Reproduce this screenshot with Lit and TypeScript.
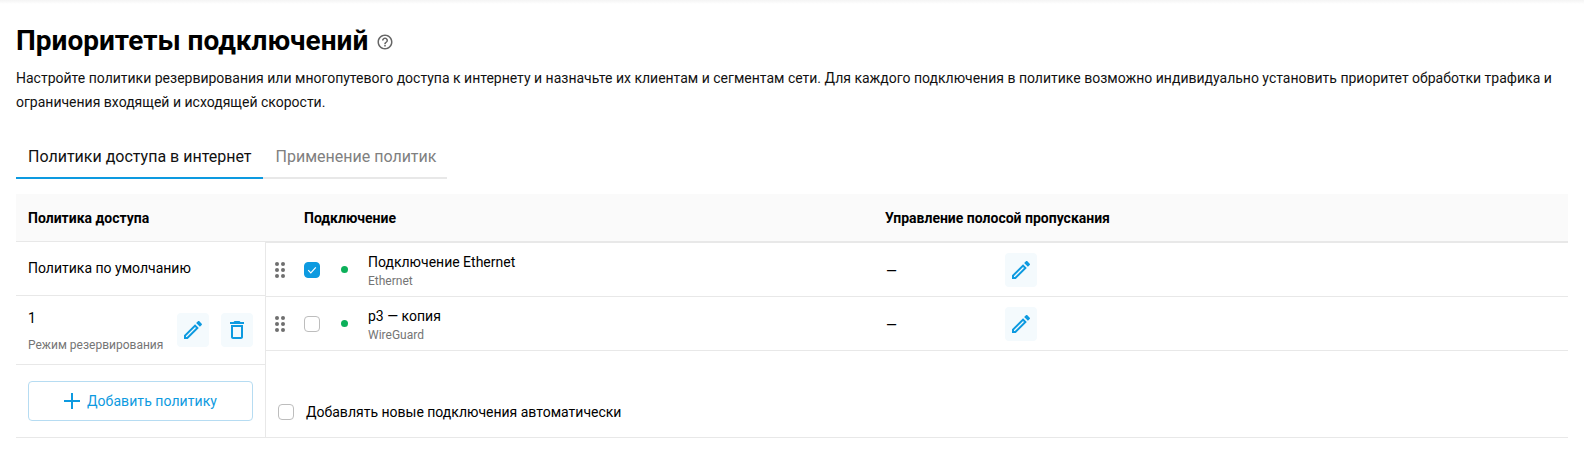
import { LitElement, css, html, svg } from 'lit';
import { customElement } from 'lit/decorators.js';

const editIcon = svg`<path d="M14.06 9.02l.92.92L5.92 19H5v-.92l9.06-9.06M17.66 3c-.25 0-.51.1-.7.29l-1.83 1.83 3.75 3.75 1.83-1.83c.39-.39.39-1.02 0-1.41l-2.34-2.34c-.2-.2-.45-.29-.71-.29zm-3.6 3.19L3 17.25V21h3.75L17.81 9.94l-3.75-3.75z"/>`;
const deleteIcon = svg`<path d="M16 9v10H8V9h8m-1.5-6h-5l-1 1H5v2h14V4h-3.5l-1-1zM18 7H6v12c0 1.1.9 2 2 2h8c1.1 0 2-.9 2-2V7z"/>`;
const helpIcon = svg`<path d="M11 18h2v-2h-2v2zm1-16C6.48 2 2 6.48 2 12s4.48 10 10 10 10-4.48 10-10S17.52 2 12 2zm0 18c-4.41 0-8-3.59-8-8s3.59-8 8-8 8 3.59 8 8-3.59 8-8 8zm0-14c-2.21 0-4 1.79-4 4h2c0-1.1.9-2 2-2s2 .9 2 2c0 2-3 1.75-3 5h2c0-2.25 3-2.5 3-5 0-2.21-1.79-4-4-4z"/>`;

const connections = [
  { name: 'Подключение Ethernet', type: 'Ethernet', checked: true },
  { name: 'p3 — копия', type: 'WireGuard', checked: false },
];

@customElement('app-root')
export class AppRoot extends LitElement {
  static styles = css`
    :host {
      display: block;
      font-family: Roboto, sans-serif;
      font-size: 14px;
      color: #000;
      background: #fff;
      height: 473px;
      overflow: hidden;
    }

    .top-shade {
      height: 4px;
      background: linear-gradient(#f4f4f4, #fff);
    }

    .page {
      padding: 0 16px;
    }

    .title-row {
      display: flex;
      align-items: center;
      gap: 8px;
      height: 44px;
      margin-top: 15px;
    }

    h1 {
      margin: 0;
      font-size: 28px;
      line-height: 44px;
      font-weight: 700;
    }

    .help {
      width: 18px;
      height: 18px;
      fill: #666;
      margin-top: 2px;
    }

    .desc {
      margin: 3px 0 0;
      line-height: 24px;
      color: #111;
    }

    .tabs {
      display: inline-flex;
      margin-top: 21px;
      border-bottom: 2px solid #e8e8e8;
      vertical-align: top;
    }

    .tab {
      padding: 0 11px 0 13px;
      height: 42px;
      line-height: 44px;
      font-size: 16px;
      color: #808080;
      margin-bottom: -2px;
      border-bottom: 2px solid transparent;
    }

    .tab.active {
      padding: 0 11px 0 12px;
      color: #111;
      border-bottom-color: #0d9ae0;
    }

    .head {
      display: grid;
      grid-template-columns: 276px 581px 1fr;
      height: 47px;
      align-items: center;
      background: #fafafa;
      margin-top: 15px;
      padding-left: 12px;
      font-weight: 700;
    }

    .body {
      display: grid;
      grid-template-columns: 250px 1fr;
      border-top: 1px solid #e8e8e8;
      border-bottom: 1px solid #e8e8e8;
      height: 195px;
    }

    .policies {
      border-right: 1px solid #e8e8e8;
      display: flex;
      flex-direction: column;
    }

    .policy {
      display: flex;
      align-items: center;
      padding: 0 12px;
      border-bottom: 1px solid #e8e8e8;
    }

    .policy.default {
      height: 51px;
      padding-bottom: 2px;
    }

    .policy.named {
      height: 68px;
      justify-content: space-between;
    }

    .sub {
      font-size: 12px;
      color: #757575;
    }

    .policy .stack {
      display: flex;
      flex-direction: column;
      gap: 12px;
      margin-top: 1px;
    }

    .actions {
      display: flex;
      gap: 12px;
    }

    .icon-btn {
      width: 32px;
      height: 34px;
      border-radius: 4px;
      background: #f4fafd;
      display: flex;
      align-items: center;
      justify-content: center;
    }

    .icon-btn svg {
      width: 24px;
      height: 24px;
      fill: #0d9ae0;
    }

    .add-wrap {
      padding: 16px 12px;
    }

    .add {
      height: 38px;
      border: 1px solid #b6dcf2;
      border-radius: 4px;
      display: flex;
      align-items: center;
      justify-content: center;
      gap: 7px;
      color: #0d9ae0;
      letter-spacing: 0.07px;
    }

    .add svg {
      width: 16px;
      height: 16px;
      stroke: #0d9ae0;
      stroke-width: 2;
    }

    .connections {
      display: flex;
      flex-direction: column;
    }

    .rows {
      border-bottom: 1px solid #e8e8e8;
    }

    .conn {
      display: grid;
      grid-template-columns: 38px 37px 27px 518px 1fr;
      align-items: center;
      height: 53px;
      border-top: 1px solid #e8e8e8;
    }

    .drag {
      display: grid;
      grid-template-columns: 4px 4px;
      gap: 2px 2px;
      width: 10px;
      margin-left: 9px;
    }

    .drag i {
      width: 4px;
      height: 4px;
      border-radius: 50%;
      background: #6f6f6f;
    }

    .check {
      width: 16px;
      height: 16px;
      box-sizing: border-box;
      border: 1px solid #bdbdbd;
      border-radius: 4px;
      background: #fff;
      display: flex;
      align-items: center;
      justify-content: center;
    }

    .check.on {
      background: #0d9ae0;
      border-color: #0d9ae0;
    }

    .check svg {
      width: 10px;
      height: 10px;
      fill: none;
      stroke: #fff;
      stroke-width: 1.2;
    }

    .dot {
      width: 7px;
      height: 7px;
      border-radius: 50%;
      background: #0cb05a;
    }

    .conn .stack {
      display: flex;
      flex-direction: column;
      gap: 3px;
      padding-top: 4px;
      line-height: 16px;
    }

    .bandwidth {
      display: flex;
      align-items: center;
      gap: 108px;
    }

    .bandwidth span {
      margin-top: 2px;
    }

    .auto {
      display: flex;
      align-items: center;
      gap: 12px;
      margin: 53px 0 0 12px;
    }
  `;

  private renderConnection(c: { name: string; type: string; checked: boolean }) {
    return html`
      <div class="conn">
        <div class="drag">${[0, 1, 2, 3, 4, 5].map(() => html`<i></i>`)}</div>
        <div class="check ${c.checked ? 'on' : ''}">
          ${c.checked ? html`<svg viewBox="0 0 10 10"><path d="M1.2 5.2l2.6 2.6 5-5.4"/></svg>` : ''}
        </div>
        <div class="dot"></div>
        <div class="stack">
          <span>${c.name}</span>
          <span class="sub">${c.type}</span>
        </div>
        <div class="bandwidth">
          <span>—</span>
          <div class="icon-btn"><svg viewBox="0 0 24 24">${editIcon}</svg></div>
        </div>
      </div>
    `;
  }

  render() {
    return html`
      <div class="top-shade"></div>
      <div class="page">
        <div class="title-row">
          <h1>Приоритеты подключений</h1>
          <svg class="help" viewBox="0 0 24 24">${helpIcon}</svg>
        </div>
        <p class="desc">
          Настройте политики резервирования или многопутевого доступа к интернету и назначьте их клиентам и сегментам сети. Для каждого подключения в политике возможно индивидуально установить приоритет обработки трафика и ограничения входящей и исходящей скорости.
        </p>
        <div class="tabs">
          <div class="tab active">Политики доступа в интернет</div>
          <div class="tab">Применение политик</div>
        </div>
        <div class="head">
          <span>Политика доступа</span>
          <span>Подключение</span>
          <span>Управление полосой пропускания</span>
        </div>
        <div class="body">
          <div class="policies">
            <div class="policy default">Политика по умолчанию</div>
            <div class="policy named">
              <div class="stack">
                <span>1</span>
                <span class="sub">Режим резервирования</span>
              </div>
              <div class="actions">
                <div class="icon-btn"><svg viewBox="0 0 24 24">${editIcon}</svg></div>
                <div class="icon-btn"><svg viewBox="0 0 24 24">${deleteIcon}</svg></div>
              </div>
            </div>
            <div class="add-wrap">
              <div class="add">
                <svg viewBox="0 0 16 16"><path d="M8 0v16M0 8h16"/></svg>
                Добавить политику
              </div>
            </div>
          </div>
          <div class="connections">
            <div class="rows">${connections.map((c) => this.renderConnection(c))}</div>
            <div class="auto">
              <div class="check"></div>
              <span>Добавлять новые подключения автоматически</span>
            </div>
          </div>
        </div>
      </div>
    `;
  }
}
